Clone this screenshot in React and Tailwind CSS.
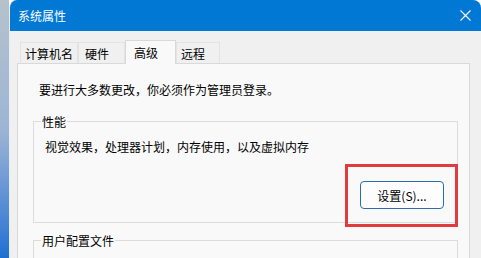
const tabs = [
  { label: "计算机名", w: "w-[58px]", pl: "pl-[4px]" },
  { label: "硬件", w: "w-[47px]", pl: "pl-[6px]" },
  { label: "高级", w: "w-[51px]", pl: "pl-[8px]", active: true },
  { label: "远程", w: "w-[44px]", pl: "pl-[4px]" },
];

const Tab = ({ t }) =>
  t.active ? (
    <div
      className={`${t.w} ${t.pl} h-[24px] pt-[3px] bg-[#f9f9f9] border border-b-0 border-[#d9d9d9] leading-[17px] text-black`}
    >
      {t.label}
    </div>
  ) : (
    <div
      className={`${t.w} ${t.pl} h-[21px] mb-px pt-[2px] bg-[#f0f0f0] border-t border-l border-r border-[#e3e3e3] leading-[17px] text-black`}
    >
      {t.label}
    </div>
  );

export default function App() {
  return (
    <div className="flex w-[481px] h-[258px] overflow-hidden text-[12px] font-['Noto_Sans_CJK_SC','Noto_Sans',sans-serif]">
      {/* desktop strip */}
      <div className="w-[9px] shrink-0 bg-gradient-to-b from-[#b6c1cd] via-[#9db5d4] to-[#1d6fd2]" />

      {/* window */}
      <div className="flex-1 flex flex-col rounded-t-[8px] overflow-hidden bg-[#f0f0f0] border-l border-[#e8eef5]">
        <div className="h-[31px] shrink-0 bg-[#0078d4] flex items-center justify-between pl-[8px] pr-[10px] text-white">
          <span className="leading-[17px]">系统属性</span>
          <svg width="11" height="11" viewBox="0 0 11 11">
            <path d="M0.5 0.5L10.5 10.5M10.5 0.5L0.5 10.5" stroke="white" strokeWidth="1.1" />
          </svg>
        </div>

        <div className="flex-1 pl-[7px] pr-[11px] pt-[9px]">
          {/* tabs */}
          <div className="relative z-10 flex items-end h-[24px] -mb-px pl-[3px]">
            {tabs.map((t) => (
              <Tab key={t.label} t={t} />
            ))}
          </div>

          {/* panel */}
          <div className="h-[200px] bg-[#f9f9f9] border border-[#d9d9d9] pl-[15px] pr-[11px] pt-[17px] text-black">
            <div className="ml-[6px] leading-[17px]">要进行大多数更改，你必须作为管理员登录。</div>

            <fieldset className="mt-[15px] border border-[#dcdcdc] pl-[7px] pr-[13px] pb-[13px]">
              <legend className="px-[1px] leading-[17px]">性能</legend>
              <div className="mt-[8px] ml-[4px] leading-[17px]">
                视觉效果，处理器计划，内存使用，以及虚拟内存
              </div>
              <div className="flex justify-end mt-[26px]">
                <div className="relative">
                  <button className="w-[84px] h-[28px] rounded-[4px] border border-[#2b6ea8] bg-[#fdfdfd] text-black leading-[17px]">
                    设置(S)...
                  </button>
                  <div className="absolute -left-[15px] -right-[14px] -top-[17px] -bottom-[18px] border-[3px] border-[#e23b3e] pointer-events-none" />
                </div>
              </div>
            </fieldset>

            <fieldset className="mt-[9px] h-[60px] border border-[#dcdcdc] pl-[7px] pr-[13px]">
              <legend className="px-[1px] leading-[17px]">用户配置文件</legend>
            </fieldset>
          </div>
        </div>
      </div>
    </div>
  );
}
